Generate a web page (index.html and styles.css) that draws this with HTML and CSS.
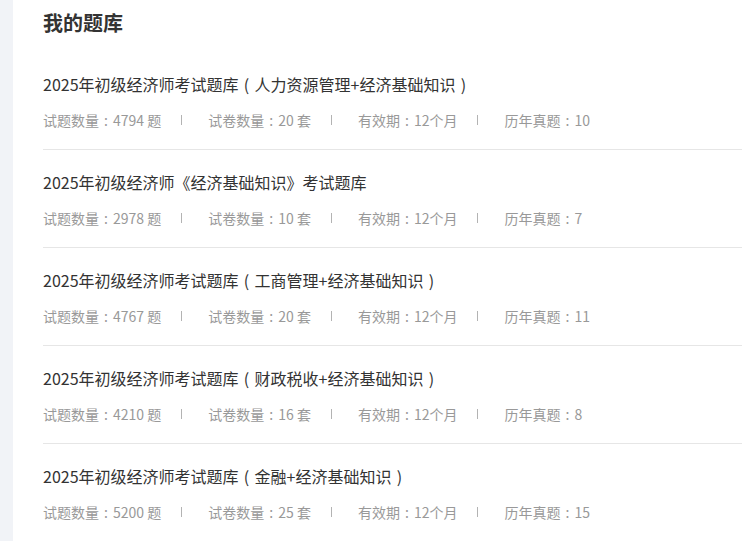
FILE: index.html
```html
<!DOCTYPE html>
<html lang="zh-CN">
<head>
<meta charset="utf-8">
<title>我的题库</title>
<link rel="stylesheet" href="styles.css">
</head>
<body>
<div class="page">
  <div class="side"></div>
  <div class="main">
    <h2 class="heading">我的题库</h2>
    <ul class="list">
      <li class="item">
        <div class="item-title">2025年初级经济师考试题库<span class="p">(</span>人力资源管理+经济基础知识<span class="p">)</span></div>
        <div class="meta"><span>试题数量<span class="p">:</span>4794 题</span><i class="sep"></i><span>试卷数量<span class="p">:</span>20 套</span><i class="sep"></i><span>有效期<span class="p">:</span>12个月</span><i class="sep"></i><span>历年真题<span class="p">:</span>10</span></div>
      </li>
      <li class="item">
        <div class="item-title">2025年初级经济师《经济基础知识》考试题库</div>
        <div class="meta"><span>试题数量<span class="p">:</span>2978 题</span><i class="sep"></i><span>试卷数量<span class="p">:</span>10 套</span><i class="sep"></i><span>有效期<span class="p">:</span>12个月</span><i class="sep"></i><span>历年真题<span class="p">:</span>7</span></div>
      </li>
      <li class="item">
        <div class="item-title">2025年初级经济师考试题库<span class="p">(</span>工商管理+经济基础知识<span class="p">)</span></div>
        <div class="meta"><span>试题数量<span class="p">:</span>4767 题</span><i class="sep"></i><span>试卷数量<span class="p">:</span>20 套</span><i class="sep"></i><span>有效期<span class="p">:</span>12个月</span><i class="sep"></i><span>历年真题<span class="p">:</span>11</span></div>
      </li>
      <li class="item">
        <div class="item-title">2025年初级经济师考试题库<span class="p">(</span>财政税收+经济基础知识<span class="p">)</span></div>
        <div class="meta"><span>试题数量<span class="p">:</span>4210 题</span><i class="sep"></i><span>试卷数量<span class="p">:</span>16 套</span><i class="sep"></i><span>有效期<span class="p">:</span>12个月</span><i class="sep"></i><span>历年真题<span class="p">:</span>8</span></div>
      </li>
      <li class="item">
        <div class="item-title">2025年初级经济师考试题库<span class="p">(</span>金融+经济基础知识<span class="p">)</span></div>
        <div class="meta"><span>试题数量<span class="p">:</span>5200 题</span><i class="sep"></i><span>试卷数量<span class="p">:</span>25 套</span><i class="sep"></i><span>有效期<span class="p">:</span>12个月</span><i class="sep"></i><span>历年真题<span class="p">:</span>15</span></div>
      </li>
    </ul>
  </div>
</div>
</body>
</html>
```

FILE: styles.css
```css
html, body {
  margin: 0;
  padding: 0;
  background: #ffffff;
  font-family: "Noto Sans CJK SC", "Noto Sans", sans-serif;
}
.page {
  display: flex;
  min-height: 541px;
}
.side {
  width: 13px;
  flex: none;
  background: #f1f3f7;
}
.main {
  flex: 1;
  background: #ffffff;
  padding: 8px 0 0 30px;
}
.heading {
  margin: 0 0 14px 0;
  font-size: 20px;
  line-height: 30px;
  font-weight: bold;
  color: #333333;
}
.list {
  list-style: none;
  margin: 0;
  padding: 0;
}
.item {
  padding: 20px 0 17px 0;
  border-bottom: 1px solid #e6e6e6;
}
.item-title {
  font-size: 16px;
  line-height: 24px;
  color: #333333;
}
.p {
  display: inline-block;
  width: 1em;
  text-align: center;
}
.meta {
  margin-top: 12px;
  display: flex;
  align-items: center;
  font-size: 14px;
  line-height: 24px;
  color: #999999;
}
.sep {
  display: block;
  width: 1px;
  height: 10px;
  background: #b3b3b3;
  margin: 0 26px 0 20px;
}
```
